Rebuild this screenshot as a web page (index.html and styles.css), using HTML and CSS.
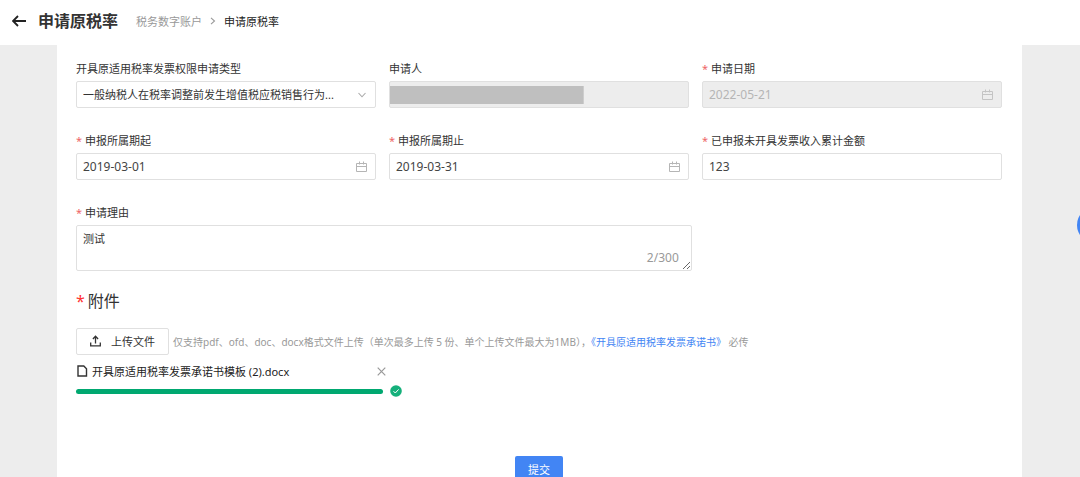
FILE: index.html
```html
<!DOCTYPE html>
<html lang="zh-CN">
<head>
    <meta charset="utf-8">
    <meta name="viewport" content="width=device-width, initial-scale=1">
    <title>申请原税率</title>
    <link rel="stylesheet" href="styles.css">
</head>
<body>
<div class="page">
    <header class="header">
        <button type="button" class="back" aria-label="返回">
            <svg width="14" height="12" viewBox="0 0 14 12"><path d="M6 1L1 6l5 5M1 6h13" fill="none" stroke="#222" stroke-width="1.8"/></svg>
        </button>
        <h1 class="title">申请原税率</h1>
        <nav class="breadcrumb">
            <a href="#">税务数字账户</a>
            <svg width="6" height="8" viewBox="0 0 6 8"><path d="M1 0.8L4.5 4L1 7.2" fill="none" stroke="#999" stroke-width="1.1"/></svg>
            <span class="current">申请原税率</span>
        </nav>
    </header>

    <main class="panel">
        <form class="form">
            <div class="grid">
                <div class="field">
                    <label for="type">开具原适用税率发票权限申请类型</label>
                    <div class="box">
                        <select id="type">
                            <option>一般纳税人在税率调整前发生增值税应税销售行为...</option>
                        </select>
                        <svg class="icon" width="10" height="10" viewBox="0 0 10 10"><path d="M1.5 3L5 6.8L8.5 3" fill="none" stroke="#aaa" stroke-width="1.1"/></svg>
                    </div>
                </div>
                <div class="field">
                    <label for="applicant">申请人</label>
                    <div class="box disabled masked">
                        <input type="text" id="applicant" disabled>
                    </div>
                </div>
                <div class="field">
                    <label for="date" class="required">申请日期</label>
                    <div class="box disabled">
                        <input type="text" id="date" value="2022-05-21" disabled>
                        <svg class="icon" width="11" height="11" viewBox="0 0 11 11"><path d="M0.5 2.5h10v8h-10zM0.5 5.5h10M3.5 0.5v3M7.5 0.5v3" fill="none" stroke="#c4c4c4"/></svg>
                    </div>
                </div>
                <div class="field">
                    <label for="start" class="required">申报所属期起</label>
                    <div class="box">
                        <input type="text" id="start" value="2019-03-01">
                        <svg class="icon" width="11" height="11" viewBox="0 0 11 11"><path d="M0.5 2.5h10v8h-10zM0.5 5.5h10M3.5 0.5v3M7.5 0.5v3" fill="none" stroke="#b5b5b5"/></svg>
                    </div>
                </div>
                <div class="field">
                    <label for="end" class="required">申报所属期止</label>
                    <div class="box">
                        <input type="text" id="end" value="2019-03-31">
                        <svg class="icon" width="11" height="11" viewBox="0 0 11 11"><path d="M0.5 2.5h10v8h-10zM0.5 5.5h10M3.5 0.5v3M7.5 0.5v3" fill="none" stroke="#b5b5b5"/></svg>
                    </div>
                </div>
                <div class="field">
                    <label for="amount" class="required">已申报未开具发票收入累计金额</label>
                    <div class="box">
                        <input type="text" id="amount" value="123">
                    </div>
                </div>
            </div>

            <div class="field reason">
                <label for="reason" class="required">申请理由</label>
                <div class="area">
                    <textarea id="reason" maxlength="300">测试</textarea>
                    <span class="count">2/300</span>
                </div>
            </div>

            <h2 class="subtitle required">附件</h2>
            <div class="upload">
                <button type="button" class="upload-btn">
                    <svg width="11" height="12" viewBox="0 0 11 12"><path d="M0.7 7.5v3.3h9.6V7.5M5.5 8.5V1.5M2.9 4L5.5 1.3L8.1 4" fill="none" stroke="#333" stroke-width="1.3"/></svg>
                    上传文件
                </button>
                <p class="tip">仅支持pdf、ofd、doc、docx格式文件上传（单次最多上传 5 份、单个上传文件最大为1MB），<a href="#">《开具原适用税率发票承诺书》</a> 必传</p>
            </div>
            <div class="file">
                <svg width="12" height="12" viewBox="0 0 12 12"><path d="M2 1h5.8L10.5 3.8V11H2z" fill="none" stroke="#333" stroke-width="1.4"/></svg>
                <span class="file-name">开具原适用税率发票承诺书模板 (2).docx</span>
                <button type="button" class="remove" aria-label="删除">
                    <svg width="9" height="9" viewBox="0 0 9 9"><path d="M0.7 0.7l7.6 7.6M8.3 0.7L0.7 8.3" stroke="#999" stroke-width="1.2"/></svg>
                </button>
            </div>
            <div class="progress">
                <div class="bar"></div>
                <svg width="12" height="12" viewBox="0 0 12 12"><circle cx="6" cy="6" r="5.8" fill="#15b07b"/><path d="M3.5 6.2L5.3 8l3.3-3.6" fill="none" stroke="#fff" stroke-width="1"/></svg>
            </div>

            <div class="actions">
                <button type="submit" class="submit">提交</button>
            </div>
        </form>
    </main>
</div>
<button type="button" class="float" aria-label="帮助"></button>
</body>
</html>
```
FILE: styles.css
```css
* {
    box-sizing: border-box;
}
body {
    margin: 0;
    background: #ededed;
    color: #333;
    font-family: "Noto Sans", "Noto Sans CJK SC", sans-serif;
    font-size: 11px;
}
button, input, select, textarea {
    margin: 0;
    padding: 0;
    border: 0;
    outline: none;
    background: none;
    color: inherit;
    font-family: inherit;
    font-size: inherit;
}
button {
    cursor: pointer;
}
a {
    text-decoration: none;
}
svg {
    flex: none;
    display: block;
}
.page {
    height: 100vh;
    overflow: hidden;
    display: flex;
    flex-direction: column;
}

/* header */
.header {
    flex: none;
    display: flex;
    align-items: center;
    height: 45px;
    padding: 0 12px 3px;
    background: #fff;
}
.title {
    margin: 0 18px 0 12px;
    font-size: 16px;
    line-height: 24px;
}
.breadcrumb {
    display: flex;
    align-items: center;
    gap: 8px;
}
.breadcrumb a {
    color: #999;
}
.current {
    color: #222;
}

/* form */
.panel {
    flex: 1 0 auto;
    margin: 0 58px 0 57px;
    padding: 10px 20px 20px 19px;
    background: #fff;
}
.grid {
    display: grid;
    grid-template-columns: repeat(3, 1fr);
    gap: 19px 13px;
}
.field label {
    display: block;
    padding-top: 2px;
    line-height: 24px;
}
.required::before {
    content: "*";
    margin-right: 3px;
    color: #e66;
}
.box {
    display: flex;
    align-items: center;
    height: 27px;
    padding: 0 8px 0 6px;
    border: 1px solid #e0e0e0;
    border-radius: 2px;
}
.box input, .box select {
    flex: 1;
    min-width: 0;
    height: 25px;
    appearance: none;
}
.box input {
    color: #444;
    font-size: 12px;
}
.box.disabled {
    background-color: #ededed;
}
.box.disabled input {
    color: #b5b5b5;
}
.box.masked {
    background-image: linear-gradient(#bfbfbf, #bfbfbf);
    background-repeat: no-repeat;
    background-size: 65% 18px;
    background-position: left center;
}
.reason {
    width: 66.5%;
    margin-top: 19px;
}
.area {
    position: relative;
}
.area textarea {
    display: block;
    width: 100%;
    height: 46px;
    padding: 5px 6px;
    border: 1px solid #e0e0e0;
    border-radius: 2px;
    line-height: 16px;
    resize: vertical;
}
.count {
    position: absolute;
    right: 13px;
    bottom: 5px;
    color: #999;
    font-size: 12px;
    line-height: 16px;
}

/* attachments */
.subtitle {
    margin: 18px 0 0;
    font-size: 16px;
    font-weight: 400;
    line-height: 24px;
}
.subtitle.required::before {
    color: #f33;
}
.upload {
    display: flex;
    align-items: center;
    gap: 4px;
    margin-top: 15px;
}
.upload-btn {
    flex: none;
    display: flex;
    align-items: center;
    gap: 10px;
    height: 27px;
    padding: 0 13px 1px;
    border: 1px solid #e0e0e0;
    border-radius: 2px;
}
.tip {
    margin: 0;
    color: #999;
    font-size: 10px;
}
.tip a {
    color: #4285f4;
}
.file {
    display: flex;
    align-items: center;
    gap: 4px;
    width: 310px;
    height: 32px;
    color: #222;
}
.file-name {
    flex: 1;
}
.progress {
    display: flex;
    align-items: center;
    gap: 7px;
    height: 8px;
}
.bar {
    width: 307px;
    height: 5px;
    border-radius: 3px;
    background: #00a870;
}
.actions {
    margin-top: 61px;
    text-align: center;
}
.submit {
    height: 27px;
    padding: 0 13px 2px;
    border-radius: 2px;
    background: #4285f4;
    color: #fff;
}

/* half hidden help bubble */
.float {
    position: fixed;
    top: 207px;
    right: -33px;
    width: 36px;
    height: 36px;
    border-radius: 50%;
    background: #4285f4;
}
```
